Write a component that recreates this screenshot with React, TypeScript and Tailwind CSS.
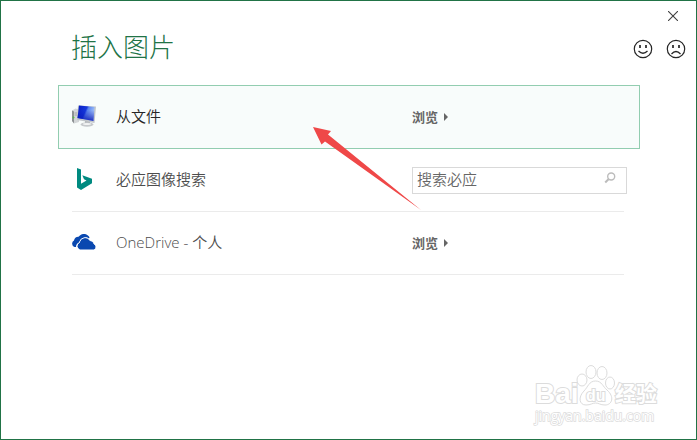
import type { ReactNode } from 'react';

function ComputerIcon() {
  return (
    <svg viewBox="0 0 26 24" className="h-6 w-[26px]" aria-hidden="true">
      <defs>
        <linearGradient id="screen" x1="0" y1="0.2" x2="1" y2="0.6">
          <stop offset="0" stopColor="#0a1fc4" />
          <stop offset="0.45" stopColor="#1638dc" />
          <stop offset="0.55" stopColor="#5c86ee" />
          <stop offset="1" stopColor="#b4d0fb" />
        </linearGradient>
        <linearGradient id="lowerScreen" x1="0" y1="0" x2="0" y2="1">
          <stop offset="0.3" stopColor="#0818b8" stopOpacity="0" />
          <stop offset="1" stopColor="#0818b8" stopOpacity="0.9" />
        </linearGradient>
      </defs>
      <path d="M0 6.500 3.500 4.500 7 5.500V18L2 19.500 0 17Z" fill="#d3d6d8" />
      <path d="M0 6.500 2 7.500V19.500L0 17Z" fill="#8d9194" />
      <path d="M2.500 9h3M2.500 11h3" stroke="#999" strokeWidth="0.8" />
      <circle cx="1.500" cy="13.500" r="1" fill="#58b947" />
      <path d="M13 17h5v3h-5z" fill="#a9adb0" />
      <ellipse cx="15" cy="20.500" rx="6.500" ry="2.200" fill="#c6c9cc" />
      <ellipse cx="15" cy="20" rx="4" ry="1" fill="#f1f2f3" />
      <path d="M6 1.500 24 2.500 22.500 19 5 16Z" fill="#c2c6ca" />
      <path d="M7 1.500 22.500 3 21.500 17 5.500 14Z" fill="url(#screen)" />
      <path d="M7 1.500 22.500 3 21.500 17 5.500 14Z" fill="url(#lowerScreen)" />
    </svg>
  );
}

function BingIcon() {
  return (
    <svg viewBox="0 0 16 22" className="ml-1 h-[22px] w-4" aria-hidden="true">
      <path d="M1 0 5 1.400V15.800L10.500 12.600 8 11.300 6.300 7.200 16 10.700V15.200L5 22 1 19.600Z" fill="#008a80" />
    </svg>
  );
}

function OneDriveIcon() {
  return (
    <svg viewBox="0 0 26 16" className="-ml-px h-4 w-[26px]" aria-hidden="true">
      <path
        d="M5 13H3.500A3.500 3.500 0 0 1 3 6.600 4.500 4.500 0 0 1 7.500 2.800 6.500 6.500 0 0 1 18.500 3.200L18 4.500A7 7 0 0 0 8 8.500 5 5 0 0 0 5 13Z"
        fill="#0a48b0"
      />
      <path
        d="M9 15.500A3.600 3.600 0 0 1 8.500 8.600 5.600 5.600 0 0 1 19 6.700 4.300 4.300 0 0 1 23 10 2.900 2.900 0 0 1 22.500 15.500Z"
        fill="#0a48b0"
        stroke="#fff"
        strokeWidth="1"
      />
      <path d="M9 15.500A3.400 3.400 0 0 1 9 9 5.400 5.400 0 0 1 18.800 7.200 4 4 0 0 1 22.500 10.300 2.700 2.700 0 0 1 22.500 15.500Z" fill="#0a48b0" />
    </svg>
  );
}

function Face({ happy }: { happy: boolean }) {
  return (
    <svg viewBox="0 0 20 20" className="size-5" fill="none" stroke="#262626" aria-hidden="true">
      <circle cx="10" cy="10" r="8.700" strokeWidth="1.200" />
      <path d="M7 6v3M13 6v3" strokeWidth="1.700" />
      <path d={happy ? 'M5.500 12Q10 16.500 14.500 12' : 'M5.500 15Q10 10 14.500 15'} strokeWidth="1.300" />
    </svg>
  );
}

function Browse({ label }: { label: string }) {
  return (
    <button
      type="button"
      aria-label={label}
      className="flex items-center gap-1.5 text-[13px] leading-5 font-bold text-[#666666]"
    >
      浏览
      <svg viewBox="0 0 4 8" className="h-2 w-1" aria-hidden="true">
        <path d="M0 0 4 4 0 8Z" fill="#666" />
      </svg>
    </button>
  );
}

function SearchBox() {
  return (
    <form
      onSubmit={(event) => event.preventDefault()}
      className="flex h-[27px] items-center border border-[#d9d9d9] bg-white pr-2 pl-1"
    >
      <input
        type="text"
        aria-label="搜索必应"
        placeholder="搜索必应"
        className="min-w-0 flex-1 bg-transparent pb-0.5 text-[15px] leading-6 font-[350] text-[#666666] outline-none placeholder:text-[#666666]"
      />
      <button type="submit" aria-label="搜索" className="flex size-4 items-center justify-center">
        <svg viewBox="0 0 12 12" className="mb-1 size-3" fill="none" stroke="#bcbcbc" aria-hidden="true">
          <circle cx="7.200" cy="4.500" r="3.500" strokeWidth="1.400" />
          <path d="M4.700 7 1.200 10.500" strokeWidth="2" />
        </svg>
      </button>
    </form>
  );
}

function Source({ icon, name, selected, children }: { icon: ReactNode; name: string; selected?: boolean; children: ReactNode }) {
  return (
    <li
      className={
        selected
          ? 'border border-[#92cdb0] bg-[#f8fcfb] pr-3 pl-[13px] text-[#262626]'
          : 'pr-[13px] pl-[14px] text-[#4d4d4d]'
      }
    >
      <div className="grid h-[62px] grid-cols-[44px_1fr_215px] items-center">
        <div className="pb-0.5">{icon}</div>
        <span className="pb-0.5 text-[15px] leading-6 font-[350]">{name}</span>
        {children}
      </div>
      {!selected && <div className="mr-[3px] border-b border-[#ebebeb]" />}
    </li>
  );
}

function Watermark() {
  return (
    <svg
      viewBox="0 0 130 66"
      className="pointer-events-none absolute right-[34px] bottom-[11px] h-[66px] w-[130px] font-['Liberation_Sans','Noto_Sans_CJK_SC',sans-serif]"
      fill="#fff"
      stroke="#dcdcdc"
      aria-hidden="true"
    >
      <g strokeWidth="1">
        <ellipse cx="50" cy="18" rx="5" ry="6" />
        <ellipse cx="59" cy="10" rx="5" ry="6.500" />
        <ellipse cx="70" cy="11" rx="5" ry="6.500" />
        <ellipse cx="78" cy="21" rx="4.500" ry="6" />
        <path d="M63.500 19C70 19 71 25 75 28C83 35 80 43 73 43C68 43 67 41 63.500 41S59 43 54 43C47 43 46 35 52 29C56 25 57 19 63.500 19Z" />
      </g>
      <g fontWeight="700" strokeWidth="2" paintOrder="stroke">
        <text x="3" y="41" fontSize="28">Bai</text>
        <text x="54" y="39" fontSize="16">du</text>
        <text x="83" y="39" fontSize="21">经验</text>
      </g>
      <text x="3" y="59" fontSize="14" strokeWidth="1.500" paintOrder="stroke" className="font-['Open_Sans',sans-serif]">
        jingyan.baidu.com
      </text>
    </svg>
  );
}

export default function App() {
  return (
    <div className="relative flex min-h-screen flex-col border border-[#217346] bg-white font-['Open_Sans','Noto_Sans_CJK_SC',sans-serif]">
      <header className="flex h-[84px] items-start justify-between pr-[10px] pl-[70px]">
        <h1 className="pt-[27px] font-['Noto_Sans_CJK_SC',sans-serif] text-[26px] leading-9 font-light text-[#217346]">插入图片</h1>
        <div className="flex flex-col items-end gap-[14px] pt-1.5">
          <button type="button" aria-label="关闭" className="mr-1 flex size-[18px] items-center justify-center">
            <svg viewBox="0 0 10 10" className="size-[10px]" stroke="#404040" aria-hidden="true">
              <path d="M0 0 10 10M10 0 0 10" strokeWidth="1.100" />
            </svg>
          </button>
          <div className="flex gap-[13px]">
            <button type="button" aria-label="微笑"><Face happy /></button>
            <button type="button" aria-label="哭脸"><Face happy={false} /></button>
          </div>
        </div>
      </header>
      <main className="pr-14 pl-[57px]">
        <ul>
          <Source icon={<ComputerIcon />} name="从文件" selected>
            <Browse label="浏览文件" />
          </Source>
          <Source icon={<BingIcon />} name="必应图像搜索">
            <SearchBox />
          </Source>
          <Source icon={<OneDriveIcon />} name="OneDrive - 个人">
            <Browse label="浏览 OneDrive" />
          </Source>
        </ul>
      </main>
      <svg viewBox="0 0 108 83" className="pointer-events-none absolute top-[126px] left-[312px] h-[83px] w-[108px]" aria-hidden="true">
        <path d="M0 0 18 4 15 7.500 108 83 12 14.500 8.500 17.500Z" fill="#ef4848" />
      </svg>
      <Watermark />
    </div>
  );
}
